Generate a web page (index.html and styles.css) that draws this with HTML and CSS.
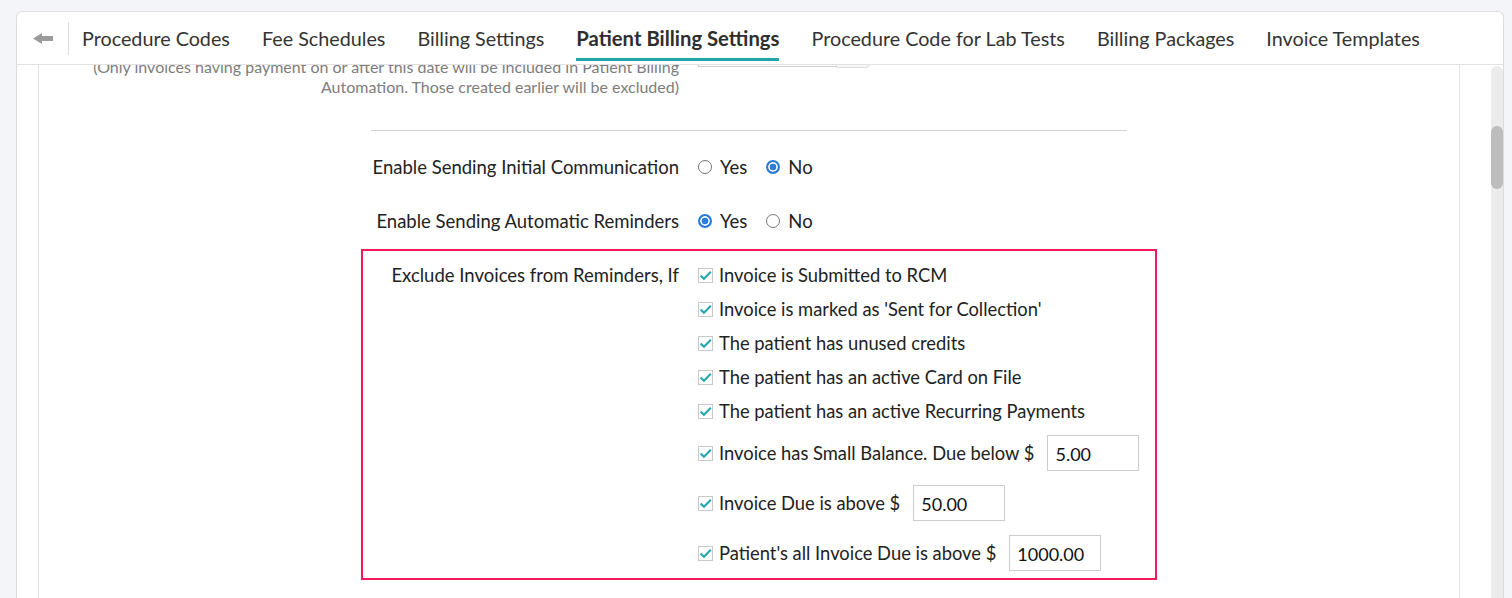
FILE: index.html
```html
<!DOCTYPE html>
<html lang="en">
<head>
<meta charset="utf-8">
<title>Patient Billing Settings</title>
<link rel="stylesheet" href="styles.css">
</head>
<body>
<div class="card">
  <div class="header">
    <div class="back">
      <svg width="20" height="11" viewBox="0 0 20 11"><polygon points="0,5.5 9,0 9,3 20,3 20,8 9,8 9,11" fill="#9b9b9b"/></svg>
    </div>
    <div class="sep"></div>
    <nav class="tabs">
      <a class="tab"><span>Procedure Codes</span></a>
      <a class="tab"><span>Fee Schedules</span></a>
      <a class="tab"><span>Billing Settings</span></a>
      <a class="tab active"><span>Patient Billing Settings</span></a>
      <a class="tab"><span>Procedure Code for Lab Tests</span></a>
      <a class="tab"><span>Billing Packages</span></a>
      <a class="tab"><span>Invoice Templates</span></a>
    </nav>
  </div>
  <div class="body">
    <div class="scroll">
      <div class="panel">
        <div class="form">
          <div class="row date-row">
            <div class="label-col">
              <div class="note">(Only invoices having payment on or after this date will be included in Patient Billing<br>Automation. Those created earlier will be excluded)</div>
            </div>
            <div class="field">
              <div class="date-input"><span class="date-box"></span><span class="date-btn"></span></div>
            </div>
          </div>
          <div class="divider"></div>
          <div class="row radio-row">
            <div class="label">Enable Sending Initial Communication</div>
            <div class="field radios">
              <label class="radio"><span class="dot"></span>Yes</label>
              <label class="radio"><span class="dot on"></span>No</label>
            </div>
          </div>
          <div class="row radio-row">
            <div class="label">Enable Sending Automatic Reminders</div>
            <div class="field radios">
              <label class="radio"><span class="dot on"></span>Yes</label>
              <label class="radio"><span class="dot"></span>No</label>
            </div>
          </div>
          <div class="highlight">
            <div class="label">Exclude Invoices from Reminders, If</div>
            <div class="checks">
              <div class="check"><span class="box"><svg width="13" height="13" viewBox="0 0 13 13"><path d="M1.6 6.4 L5 9.8 L11.8 2.8" fill="none" stroke="#22a7b2" stroke-width="2.1"/></svg></span>Invoice is Submitted to RCM</div>
              <div class="check"><span class="box"><svg width="13" height="13" viewBox="0 0 13 13"><path d="M1.6 6.4 L5 9.8 L11.8 2.8" fill="none" stroke="#22a7b2" stroke-width="2.1"/></svg></span>Invoice is marked as 'Sent for Collection'</div>
              <div class="check"><span class="box"><svg width="13" height="13" viewBox="0 0 13 13"><path d="M1.6 6.4 L5 9.8 L11.8 2.8" fill="none" stroke="#22a7b2" stroke-width="2.1"/></svg></span>The patient has unused credits</div>
              <div class="check"><span class="box"><svg width="13" height="13" viewBox="0 0 13 13"><path d="M1.6 6.4 L5 9.8 L11.8 2.8" fill="none" stroke="#22a7b2" stroke-width="2.1"/></svg></span>The patient has an active Card on File</div>
              <div class="check"><span class="box"><svg width="13" height="13" viewBox="0 0 13 13"><path d="M1.6 6.4 L5 9.8 L11.8 2.8" fill="none" stroke="#22a7b2" stroke-width="2.1"/></svg></span>The patient has an active Recurring Payments</div>
              <div class="check tall"><span class="box"><svg width="13" height="13" viewBox="0 0 13 13"><path d="M1.6 6.4 L5 9.8 L11.8 2.8" fill="none" stroke="#22a7b2" stroke-width="2.1"/></svg></span>Invoice has Small Balance. Due below $<input class="amount" type="text" value="5.00"></div>
              <div class="check tall"><span class="box"><svg width="13" height="13" viewBox="0 0 13 13"><path d="M1.6 6.4 L5 9.8 L11.8 2.8" fill="none" stroke="#22a7b2" stroke-width="2.1"/></svg></span>Invoice Due is above $<input class="amount" type="text" value="50.00"></div>
              <div class="check tall"><span class="box"><svg width="13" height="13" viewBox="0 0 13 13"><path d="M1.6 6.4 L5 9.8 L11.8 2.8" fill="none" stroke="#22a7b2" stroke-width="2.1"/></svg></span>Patient's all Invoice Due is above $<input class="amount" type="text" value="1000.00"></div>
            </div>
          </div>
        </div>
      </div>
    </div>
    <div class="scrollbar"><div class="thumb"></div></div>
  </div>
</div>
</body>
</html>
```
FILE: styles.css
```css
html, body {
  margin: 0;
  padding: 0;
  height: 598px;
  overflow: hidden;
}
body {
  background: #f4f5f9;
  font-family: Lato, "Open Sans", sans-serif;
  color: #222;
}
.card {
  margin: 11px 0 0 16px;
  width: 1488px;
  box-sizing: border-box;
  height: 620px;
  background: #fff;
  border: 1px solid #dcdcdc;
  border-bottom: none;
  border-radius: 6px 6px 0 0;
  display: flex;
  flex-direction: column;
  overflow: hidden;
}
.header {
  height: 52px;
  flex: none;
  border-bottom: 1px solid #e2e2e2;
  display: flex;
  align-items: stretch;
}
.back {
  width: 51px;
  box-sizing: border-box;
  padding-left: 16px;
  display: flex;
  align-items: center;
}
.back svg { display: block; }
.sep {
  width: 1px;
  height: 33px;
  background: #dddddd;
  align-self: center;
}
.tabs {
  display: flex;
  gap: 32px;
  margin-left: 13px;
}
.tab {
  color: #333;
  font-size: 19.75px;
  text-decoration: none;
}
.tab span {
  display: block;
  margin-top: 15px;
  line-height: 23px;
  padding-bottom: 8px;
  border-bottom: 3px solid transparent;
  white-space: nowrap;
}
.tab.active {
  font-weight: 700;
  font-size: 20.3px;
  color: #2e2e2e;
}
.tab.active span {
  border-bottom-color: #1fa7a8;
}
.body {
  flex: 1;
  display: flex;
  min-height: 0;
}
.scroll {
  flex: 1;
  overflow: hidden;
  display: flex;
}
.panel {
  margin-left: 21px;
  margin-right: 31px;
  flex: 1;
  border-left: 1px solid #e3e3e3;
  border-right: 1px solid #e3e3e3;
}
.scrollbar {
  width: 12px;
  flex: none;
  background: #ebebeb;
  border-radius: 6px 6px 0 0;
  margin-top: 1px;
}
.thumb {
  margin-top: 60px;
  height: 63px;
  background: #bdbdbd;
  border-radius: 6px;
}
.form {
  width: 756px;
  margin: -34px auto 0;
}
.row {
  display: grid;
  grid-template-columns: 308px 1fr;
  column-gap: 19px;
}
.label-col {
  text-align: right;
  min-width: 0;
  padding-top: 26px;
}
.note {
  font-size: 16px;
  line-height: 20px;
  color: #7d7d7d;
  white-space: nowrap;
  margin-left: -320px;
}
.date-input {
  display: flex;
}
.date-box {
  width: 138px;
  height: 36px;
  box-sizing: border-box;
  border: 1px solid #cfcfcf;
  border-right: none;
}
.date-btn {
  width: 34px;
  height: 37px;
  box-sizing: border-box;
  border: 1px solid #dddddd;
  background: #f7f7f7;
  border-radius: 0 4px 4px 0;
}
.divider {
  margin-top: 33px;
  height: 1px;
  background: #d3d3d3;
}
.radio-row {
  margin-top: 19px;
  height: 34px;
}
.radio-row + .radio-row {
  margin-top: 20px;
}
.label {
  text-align: right;
  font-size: 18.5px;
  line-height: 34px;
  white-space: nowrap;
}
.radios {
  display: flex;
  align-items: center;
  gap: 19px;
  font-size: 18.5px;
}
.radio {
  display: flex;
  align-items: center;
  gap: 8px;
}
.dot {
  width: 14px;
  height: 14px;
  box-sizing: border-box;
  border-radius: 50%;
  border: 1px solid #777;
  background: #fff;
}
.dot.on {
  border: 2px solid #2b7cd8;
  background: #2b7cd8;
  box-shadow: inset 0 0 0 1.7px #fff;
}
.highlight {
  margin-top: 11px;
  margin-left: -10px;
  width: 796px;
  box-sizing: border-box;
  border: 2px solid #f5195b;
  padding: 7px 0 0 8px;
  display: grid;
  grid-template-columns: 308px 1fr;
  column-gap: 19px;
  align-items: start;
}
.checks {
  display: flex;
  flex-direction: column;
}
.check {
  height: 34px;
  display: flex;
  align-items: center;
  font-size: 18.35px;
  white-space: nowrap;
}
.check.tall {
  height: 50px;
}
.box {
  width: 15px;
  height: 15px;
  box-sizing: border-box;
  border: 1px solid #c9c9c9;
  margin-right: 6px;
  display: flex;
  align-items: center;
  justify-content: center;
  background: #fff;
}
.box svg { display: block; }
.amount {
  margin-left: 13px;
  width: 92px;
  height: 36px;
  box-sizing: border-box;
  border: 1px solid #cccccc;
  border-radius: 0;
  padding: 2px 7px 0;
  font-family: Lato, "Open Sans", sans-serif;
  font-size: 18px;
  color: #111;
  outline: none;
}
```
